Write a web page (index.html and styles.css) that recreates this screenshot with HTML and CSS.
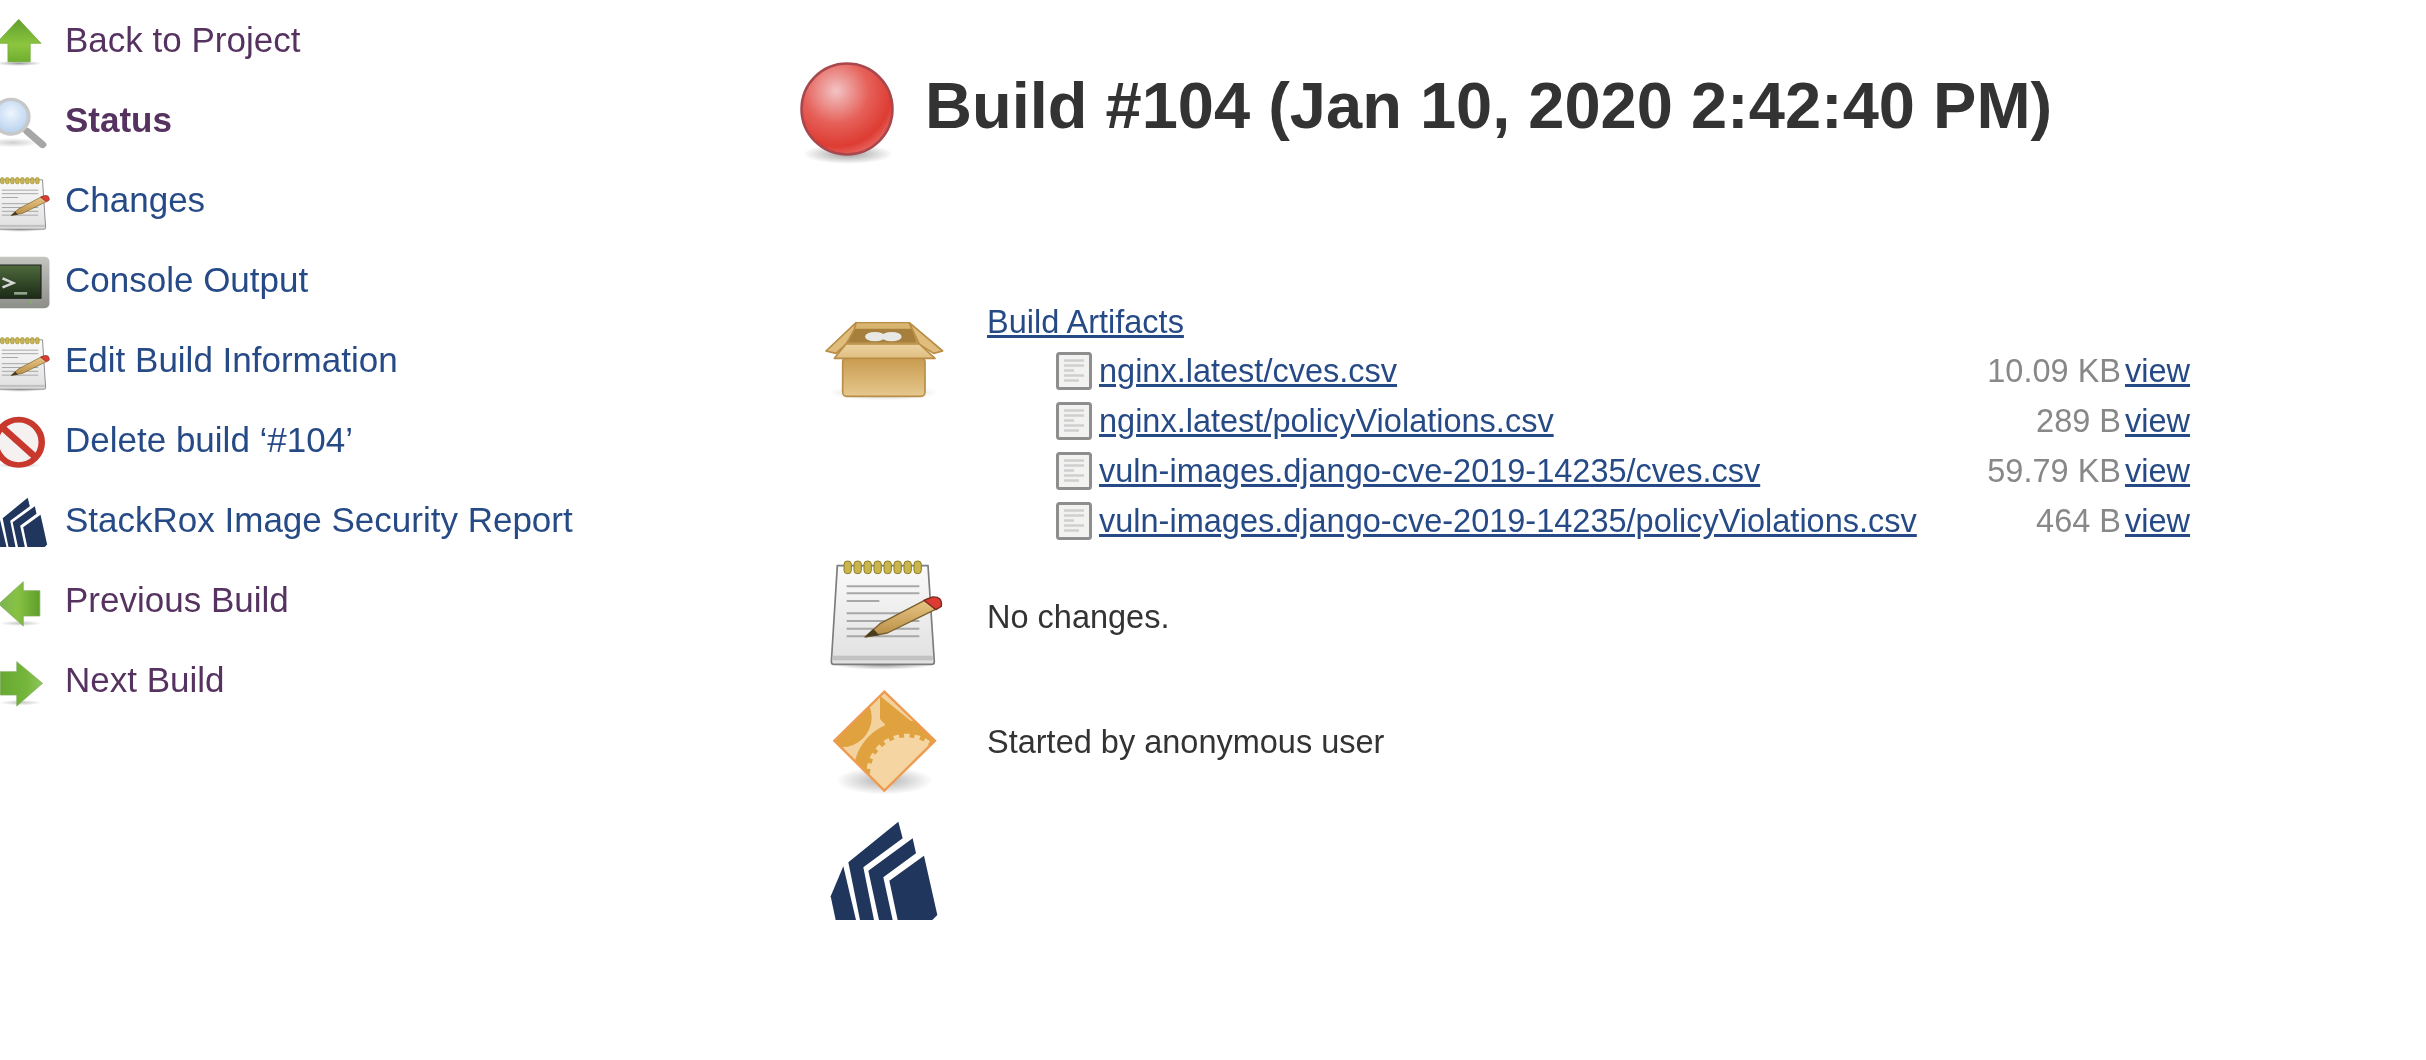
FILE: index.html
```html
<!DOCTYPE html>
<html lang="en">
<head>
<meta charset="utf-8">
<title>Build #104</title>
<link rel="stylesheet" href="styles.css">
</head>
<body>
<svg class="defs" width="0" height="0" aria-hidden="true">
  <defs>
    <linearGradient id="gUp" x1="0" y1="0" x2="0" y2="1"><stop offset="0" stop-color="#5f9e2c"/><stop offset=".6" stop-color="#8cc63f"/><stop offset="1" stop-color="#6fae2e"/></linearGradient>
    <linearGradient id="gSide" x1="1" y1="0" x2="0" y2="0"><stop offset="0" stop-color="#5f9e2c"/><stop offset=".55" stop-color="#88c243"/><stop offset="1" stop-color="#7bb455"/></linearGradient>
    <linearGradient id="gNext" x1="0" y1="0" x2="1" y2="0"><stop offset="0" stop-color="#67a832"/><stop offset=".6" stop-color="#74b53a"/><stop offset="1" stop-color="#8fc65c"/></linearGradient>
    <linearGradient id="gPage" x1="0" y1="0" x2="0" y2="1"><stop offset="0" stop-color="#fafafa"/><stop offset="1" stop-color="#e0e0e0"/></linearGradient>
    <linearGradient id="gPencil" x1="0" y1="0" x2="0" y2="1"><stop offset="0" stop-color="#ecc987"/><stop offset="1" stop-color="#b58c45"/></linearGradient>
    <linearGradient id="gBox" x1="0" y1="0" x2="0" y2="1"><stop offset="0" stop-color="#c89a4e"/><stop offset="1" stop-color="#e6c88e"/></linearGradient>
    <linearGradient id="gLid" x1="0" y1="0" x2="0" y2="1"><stop offset="0" stop-color="#edd3a2"/><stop offset="1" stop-color="#dfbd80"/></linearGradient>
    <linearGradient id="gScreen" x1="0" y1="0" x2="0" y2="1"><stop offset="0" stop-color="#4d6a3c"/><stop offset="1" stop-color="#1c2a16"/></linearGradient>
    <linearGradient id="gCase" x1="0" y1="0" x2="0" y2="1"><stop offset="0" stop-color="#c4c4c0"/><stop offset="1" stop-color="#8c8e88"/></linearGradient>
    <radialGradient id="gBall" cx=".38" cy=".3" r=".72"><stop offset="0" stop-color="#f2c4c4"/><stop offset=".5" stop-color="#e66059"/><stop offset=".85" stop-color="#dd3c32"/><stop offset="1" stop-color="#e8625c"/></radialGradient>
    <radialGradient id="gShade"><stop offset="0" stop-color="#000" stop-opacity=".38"/><stop offset="1" stop-color="#000" stop-opacity="0"/></radialGradient>
    <radialGradient id="gLens" cx=".5" cy=".4" r=".6"><stop offset="0" stop-color="#eef5fd"/><stop offset="1" stop-color="#b6d0ee"/></radialGradient>
    <clipPath id="cDiamond"><polygon points="253,455 408,605 253,758 100,605"/></clipPath>
    <symbol id="iNotepad" viewBox="75 45 360 360">
      <ellipse cx="250" cy="378" rx="150" ry="14" fill="url(#gShade)"/>
      <path d="M112 80H384L403 368Q403 376 394 376H102Q94 376 94 368Z" fill="url(#gPage)" stroke="#7c7c7c" stroke-width="5"/>
      <rect x="98" y="350" width="300" height="14" fill="#c2c2c2"/>
      <g fill="#c9b64c" stroke="#8d7d24" stroke-width="3">
        <rect x="132" y="66" width="22" height="38" rx="10"/><rect x="162" y="66" width="22" height="38" rx="10"/><rect x="192" y="66" width="22" height="38" rx="10"/><rect x="222" y="66" width="22" height="38" rx="10"/><rect x="252" y="66" width="22" height="38" rx="10"/><rect x="282" y="66" width="22" height="38" rx="10"/><rect x="312" y="66" width="22" height="38" rx="10"/><rect x="342" y="66" width="22" height="38" rx="10"/>
      </g>
      <g stroke="#a8a8a8" stroke-width="6">
        <path d="M140 142H358M140 163H358M140 186H238M140 223H358M140 246H358M140 269H358M140 292H358"/>
      </g>
      <path d="M195 294L240 254L385 178L405 212L262 282Z" fill="url(#gPencil)" stroke="#7a5f30" stroke-width="4" stroke-linejoin="round"/>
      <path d="M195 294L220 270L238 289Z" fill="#4a3c1f"/>
      <path d="M372 184L398 174Q428 172 424 202L408 212Z" fill="#dd3c32" stroke="#7c2a20" stroke-width="4"/>
    </symbol>
    <symbol id="iLogo" viewBox="75 825 360 360">
      <path fill="#20365c" d="M130 982L92 1072L107 1143H168Z"/>
      <path fill="#20365c" d="M145 970L295 848L308 898L190 985L222 1143H180Z"/>
      <path fill="#20365c" d="M205 995L338 898L348 943L250 1015L278 1143H237Z"/>
      <path fill="#20365c" d="M268 1025L372 950L412 1128L397 1143H293Z"/>
    </symbol>
    <symbol id="iFile" viewBox="0 0 36 38">
      <rect x="1.500" y="1.500" width="33" height="35" rx="2" fill="#f2f2f0" stroke="#8e8e8e" stroke-width="3"/>
      <path d="M8 8.500H28M8 13.500H28M8 18.500H18M8 23.500H28M8 28.500H23" stroke="#cfcfcf" stroke-width="2.500"/>
    </symbol>
  </defs>
</svg>

<div class="page">
  <nav class="sidebar">
    <a class="task visited">
      <svg class="task-icon" viewBox="-22 42 156 180" preserveAspectRatio="none"><ellipse cx="50" cy="190" rx="60" ry="8" fill="url(#gShade)"/><polygon fill="url(#gUp)" stroke="#6ea83a" stroke-width="2" points="50,58 108,130 80,130 80,185 22,185 22,130 -8,130"/></svg>
      <span>Back to Project</span>
    </a>
    <a class="task visited current">
      <svg class="task-icon" viewBox="-22 282 156 180" preserveAspectRatio="none"><ellipse cx="35" cy="428" rx="70" ry="14" fill="url(#gShade)" opacity=".5"/><path d="M72 394L112 434" stroke="#a6a6a6" stroke-width="20" stroke-linecap="round"/><ellipse cx="30" cy="350" rx="46" ry="52" fill="url(#gLens)" stroke="#c8c8c8" stroke-width="10"/></svg>
      <span>Status</span>
    </a>
    <a class="task">
      <svg class="task-icon"><use href="#iNotepad"/></svg>
      <span>Changes</span>
    </a>
    <a class="task">
      <svg class="task-icon" viewBox="-22 762 156 180" preserveAspectRatio="none"><rect x="-60" y="770" width="190" height="155" rx="14" fill="url(#gCase)"/><rect x="-50" y="795" width="158" height="100" fill="url(#gScreen)" stroke="#222" stroke-width="3"/><path d="M8 835L36 849L8 862" fill="none" stroke="#d8d8d8" stroke-width="7"/><rect x="38" y="876" width="34" height="8" fill="#8ea38a"/><circle cx="82" cy="907" r="3" fill="#7ac143"/></svg>
      <span>Console Output</span>
    </a>
    <a class="task">
      <svg class="task-icon"><use href="#iNotepad"/></svg>
      <span>Edit Build Information</span>
    </a>
    <a class="task">
      <svg class="task-icon" viewBox="-22 102 156 180" preserveAspectRatio="none"><ellipse cx="50" cy="256" rx="62" ry="8" fill="url(#gShade)" opacity=".6"/><ellipse cx="50" cy="187" rx="60" ry="68" fill="#f4f1f0" stroke="#c9382c" stroke-width="17"/><path d="M10 145L92 230" stroke="#c9382c" stroke-width="19"/></svg>
      <span>Delete build ‘#104’</span>
    </a>
    <a class="task">
      <svg class="task-icon"><use href="#iLogo"/></svg>
      <span>StackRox Image Security Report</span>
    </a>
    <a class="task visited">
      <svg class="task-icon" viewBox="-22 582 156 180" preserveAspectRatio="none"><ellipse cx="55" cy="730" rx="55" ry="8" fill="url(#gShade)" opacity=".6"/><polygon fill="url(#gSide)" stroke="#7bac58" stroke-width="2" points="-2,672 62,605 62,632 105,632 105,708 62,708 62,738"/></svg>
      <span>Previous Build</span>
    </a>
    <a class="task visited">
      <svg class="task-icon" viewBox="-22 822 156 180" preserveAspectRatio="none"><ellipse cx="55" cy="968" rx="55" ry="8" fill="url(#gShade)" opacity=".6"/><polygon fill="url(#gNext)" stroke="#7bac58" stroke-width="2" points="112,910 45,845 45,875 2,875 2,945 45,945 45,978"/></svg>
      <span>Next Build</span>
    </a>
  </nav>

  <main class="main">
    <h1 class="title">
      <svg class="ball" viewBox="0 0 96 106"><ellipse cx="48" cy="92" rx="45" ry="10" fill="url(#gShade)"/><circle cx="47" cy="47" r="45.500" fill="url(#gBall)" stroke="#a8474c" stroke-width="2.500"/></svg>
      <span>Build #104 (Jan 10, 2020 2:42:40 PM)</span>
    </h1>

    <section class="row artifacts">
      <svg class="big-icon" viewBox="132 830 360 360">
        <ellipse cx="308" cy="1060" rx="165" ry="24" fill="url(#gShade)" opacity=".55"/>
        <path d="M225 850H385L410 915H195Z" fill="#d9b670" stroke="#b98d45" stroke-width="4" stroke-linejoin="round"/>
        <path d="M222 868H392L406 910H200Z" fill="#a67f3c"/>
        <path d="M225 850L135 935L165 942L195 915L220 870Z" fill="#e0bd7c" stroke="#b98d45" stroke-width="5" stroke-linejoin="round"/>
        <path d="M385 850L485 935L458 942L415 915L394 870Z" fill="#e0bd7c" stroke="#b98d45" stroke-width="5" stroke-linejoin="round"/>
        <ellipse cx="282" cy="892" rx="30" ry="14" fill="#e8e8e4"/><ellipse cx="332" cy="892" rx="30" ry="14" fill="#e8e8e4"/>
        <rect x="185" y="955" width="247" height="116" rx="12" fill="url(#gBox)" stroke="#b78e48" stroke-width="5"/>
        <path d="M160 957L195 914H415L462 957Z" fill="url(#gLid)" stroke="#b98d45" stroke-width="5" stroke-linejoin="round"/>
      </svg>
      <div class="body">
        <a class="line-link">Build Artifacts</a>
        <ul class="files">
          <li class="file"><svg class="file-icon"><use href="#iFile"/></svg><a class="file-name">nginx.latest/cves.csv</a><span class="size">10.09 KB</span><a class="view">view</a></li>
          <li class="file"><svg class="file-icon"><use href="#iFile"/></svg><a class="file-name">nginx.latest/policyViolations.csv</a><span class="size">289 B</span><a class="view">view</a></li>
          <li class="file"><svg class="file-icon"><use href="#iFile"/></svg><a class="file-name">vuln-images.django-cve-2019-14235/cves.csv</a><span class="size">59.79 KB</span><a class="view">view</a></li>
          <li class="file"><svg class="file-icon"><use href="#iFile"/></svg><a class="file-name">vuln-images.django-cve-2019-14235/policyViolations.csv</a><span class="size">464 B</span><a class="view">view</a></li>
        </ul>
      </div>
    </section>

    <section class="row centered">
      <svg class="big-icon"><use href="#iNotepad"/></svg>
      <div class="body shift-down">No changes.</div>
    </section>

    <section class="row centered">
      <svg class="big-icon" viewBox="75 435 360 360">
        <ellipse cx="253" cy="725" rx="145" ry="42" fill="url(#gShade)" opacity=".8"/>
        <polygon points="253,455 408,605 253,758 100,605" fill="#f3d29d"/>
        <g clip-path="url(#cDiamond)">
          <circle cx="125" cy="535" r="90" fill="#e0a23f"/>
          <circle cx="320" cy="705" r="160" fill="#e0a23f"/>
          <polygon points="240,470 405,605 300,605 240,540" fill="#e0a23f"/>
          <circle cx="320" cy="705" r="110" fill="#f5d6a3" stroke="#f5d6a3" stroke-width="22" stroke-dasharray="16 14"/>
        </g>
        <polygon points="253,458 405,605 253,755 103,605" fill="none" stroke="#ee9a50" stroke-width="7"/>
      </svg>
      <div class="body shift-up">Started by anonymous user</div>
    </section>

    <section class="row centered">
      <svg class="big-icon"><use href="#iLogo"/></svg>
    </section>
  </main>
</div>
</body>
</html>
```

FILE: styles.css
```css
* { box-sizing: border-box; }

html, body {
  margin: 0;
  padding: 0;
  background: #fff;
}

body {
  font-family: "Liberation Sans", Arial, Helvetica, sans-serif;
  font-size: 32.5px;
  color: #333;
  overflow: hidden;
}

.defs { position: absolute; }

.page {
  display: flex;
  align-items: flex-start;
  filter: blur(0.5px);
}

.sidebar {
  width: 800px;
  flex: none;
  display: flex;
  flex-direction: column;
}

.task {
  height: 80px;
  display: flex;
  align-items: center;
  gap: 14px;
  font-size: 35px;
  color: #264a86;
  text-decoration: none;
}

.task.visited { color: #55325f; }
.task.current { font-weight: bold; }

.task-icon {
  width: 60px;
  height: 60px;
  flex: none;
  margin-left: -9px;
  margin-top: 8px;
}

.main {
  flex: 1;
  padding-top: 58px;
}

.title {
  margin: 0 0 128px;
  display: flex;
  align-items: flex-start;
  gap: 29px;
  font-size: 65px;
  line-height: 96px;
  font-weight: bold;
  color: #333;
}

.ball {
  width: 96px;
  height: 106px;
  flex: none;
  margin-top: 4px;
}

.row {
  display: flex;
  align-items: flex-start;
  gap: 42px;
  padding-left: 25px;
  margin-bottom: 10px;
}

.row.centered { align-items: center; }
.artifacts { margin-bottom: 8px; }

.big-icon {
  width: 120px;
  height: 120px;
  flex: none;
}

.artifacts .big-icon { margin-top: 20px; }

.body { flex: none; width: 1203px; }
.shift-down { padding-top: 6px; }
.shift-up { padding-bottom: 3px; }

.line-link {
  display: block;
  height: 50px;
  line-height: 52px;
  color: #264a86;
  text-decoration: underline;
}

.files {
  list-style: none;
  margin: 0;
  padding: 0 0 0 69px;
}

.file {
  display: grid;
  grid-template-columns: 36px 1fr 200px 65px;
  align-items: center;
  height: 50px;
  line-height: 50px;
}

.file-icon { width: 36px; height: 38px; }

.file-name {
  margin-left: 7px;
  color: #264a86;
  text-decoration: underline;
}

.size {
  text-align: right;
  padding-right: 4px;
  color: #888;
}

.view {
  color: #264a86;
  text-decoration: underline;
}
```
